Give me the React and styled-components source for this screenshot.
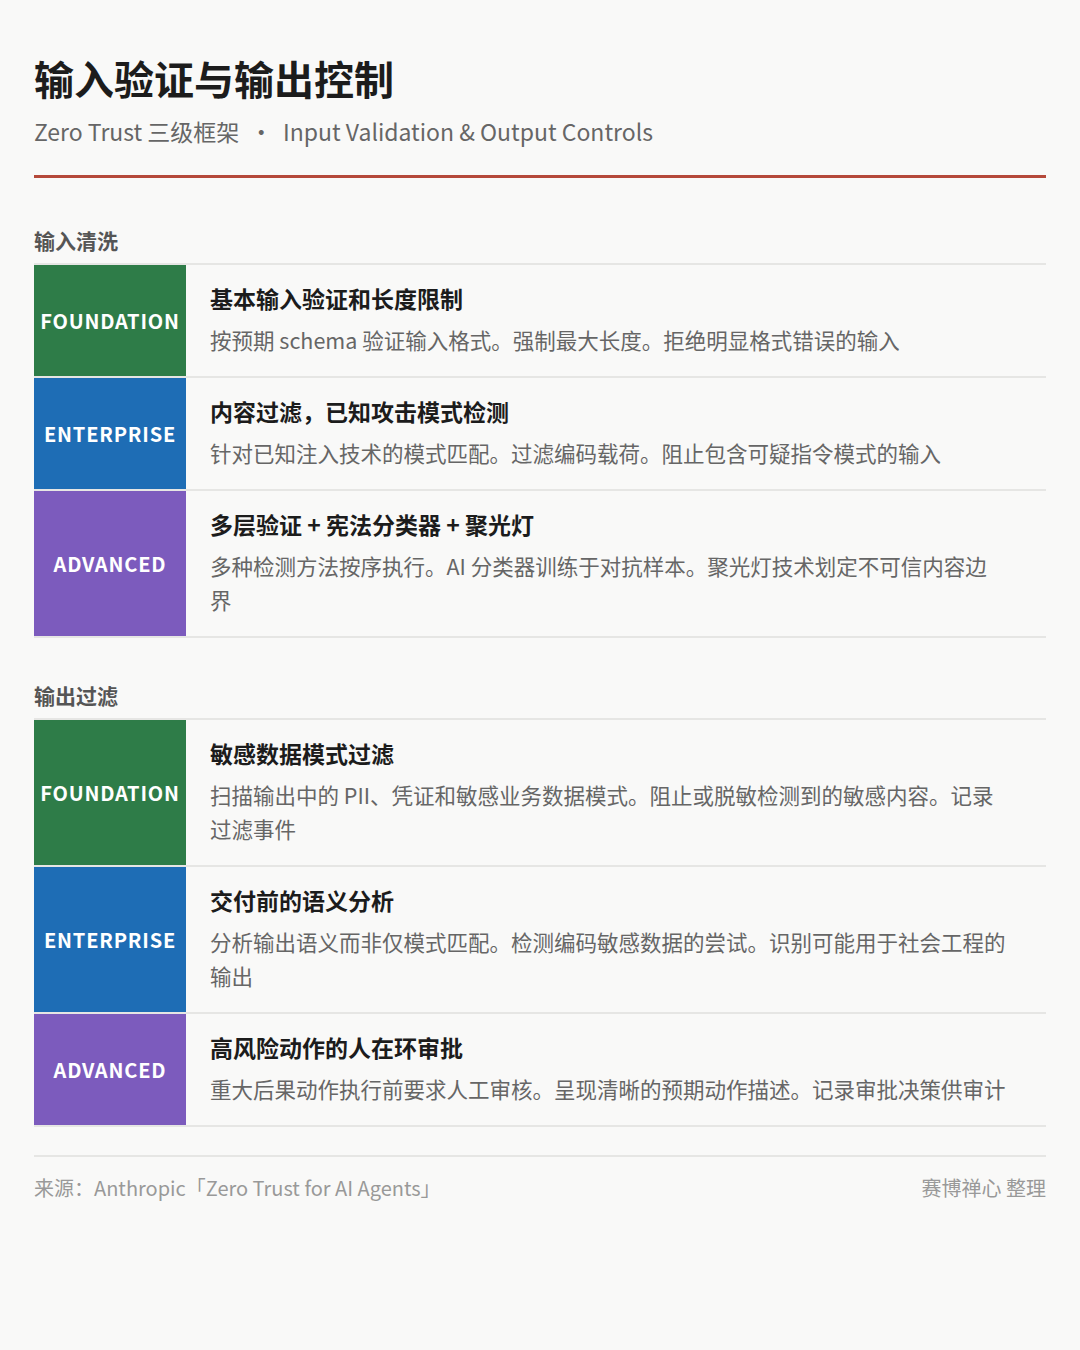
import React from "react";
import styled, { createGlobalStyle } from "styled-components";

const Global = createGlobalStyle`
  body { margin: 0; background: #f9f9f8; font-family: "Noto Sans CJK SC", "Noto Sans", sans-serif; }
`;
const Page = styled.div`width:1080px;height:1350px;box-sizing:border-box;padding:48px 34px 0;background:#f9f9f8;`;
const Title = styled.h1`margin:0;font-size:40px;font-weight:700;color:#1c1c1c;line-height:60px;`;
const Sub = styled.div`margin-top:6px;font-size:23px;color:#666;line-height:34px;`;
const Rule = styled.div`margin-top:27px;height:3px;background:#b5493a;`;
const Section = styled.div`margin-top:${p => p.$mt}px;`;
const Label = styled.div`font-size:21px;font-weight:700;color:#555;line-height:30px;margin-bottom:8px;`;
const Table = styled.div`border-top:2px solid #e6e6e4;`;
const Row = styled.div`display:flex;border-bottom:2px solid #e6e6e4;`;
const Tag = styled.div`width:152px;flex:none;background:${p => p.$c};color:#fff;font-size:20px;font-weight:700;letter-spacing:0.8px;display:flex;align-items:center;justify-content:center;`;
const Body = styled.div`flex:1;padding:16px 40px 19px 24px;`;
const RTitle = styled.div`font-size:23px;font-weight:700;color:#1c1c1c;line-height:34px;`;
const Desc = styled.div`margin-top:8px;font-size:21.5px;color:#666;line-height:34px;`;
const Footer = styled.div`margin-top:28px;border-top:2px solid #e6e6e4;display:flex;justify-content:space-between;padding-top:16px;font-size:20px;color:#999;line-height:30px;`;

const C = { FOUNDATION: "#2e7c48", ENTERPRISE: "#1e6db5", ADVANCED: "#7c5bbd" };
const input = [
  ["FOUNDATION", "基本输入验证和长度限制", "按预期 schema 验证输入格式。强制最大长度。拒绝明显格式错误的输入"],
  ["ENTERPRISE", "内容过滤，已知攻击模式检测", "针对已知注入技术的模式匹配。过滤编码载荷。阻止包含可疑指令模式的输入"],
  ["ADVANCED", "多层验证 + 宪法分类器 + 聚光灯", "多种检测方法按序执行。AI 分类器训练于对抗样本。聚光灯技术划定不可信内容边界"],
];
const output = [
  ["FOUNDATION", "敏感数据模式过滤", "扫描输出中的 PII、凭证和敏感业务数据模式。阻止或脱敏检测到的敏感内容。记录过滤事件"],
  ["ENTERPRISE", "交付前的语义分析", "分析输出语义而非仅模式匹配。检测编码敏感数据的尝试。识别可能用于社会工程的输出"],
  ["ADVANCED", "高风险动作的人在环审批", "重大后果动作执行前要求人工审核。呈现清晰的预期动作描述。记录审批决策供审计"],
];
const Rows = ({ items }) => (
  <Table>
    {items.map(([t, h, d]) => (
      <Row key={h}>
        <Tag $c={C[t]}>{t}</Tag>
        <Body><RTitle>{h}</RTitle><Desc>{d}</Desc></Body>
      </Row>
    ))}
  </Table>
);

export default function App() {
  return (
    <Page>
      <Global />
      <Title>输入验证与输出控制</Title>
      <Sub>Zero Trust 三级框架 &nbsp;·&nbsp; Input Validation &amp; Output Controls</Sub>
      <Rule />
      <Section $mt={47}><Label>输入清洗</Label><Rows items={input} /></Section>
      <Section $mt={42}><Label>输出过滤</Label><Rows items={output} /></Section>
      <Footer><span>来源：Anthropic「Zero Trust for AI Agents」</span><span>赛博禅心 整理</span></Footer>
    </Page>
  );
}
